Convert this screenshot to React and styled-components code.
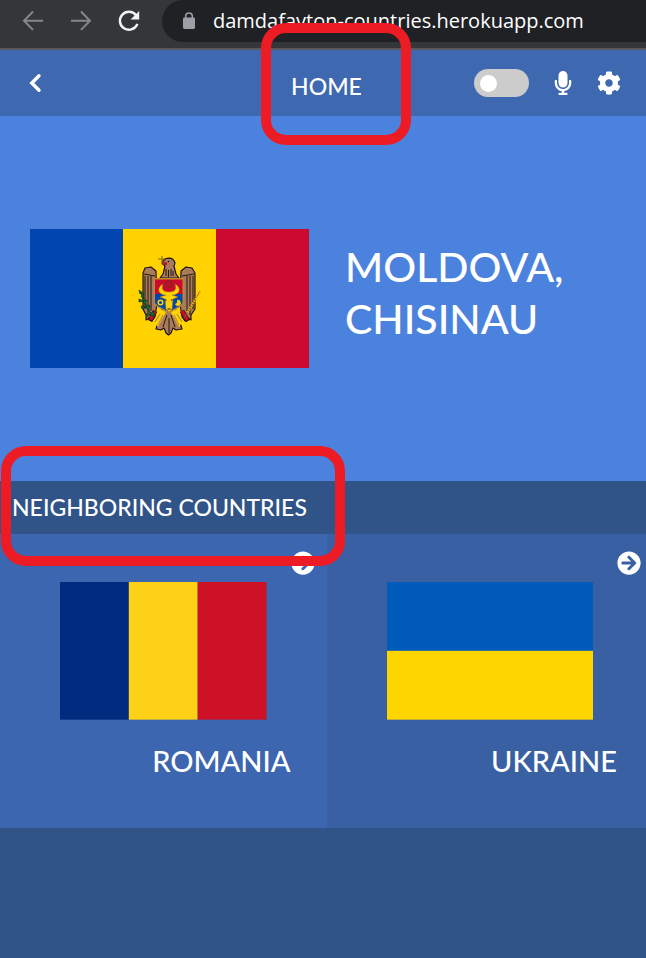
import React from 'react';
import styled, { createGlobalStyle } from 'styled-components';
import { FaArrowCircleRight, FaCog, FaMicrophone } from 'react-icons/fa';

const GlobalStyle = createGlobalStyle`
  *, *::before, *::after { box-sizing: border-box; }
  body {
    margin: 0;
    background: #305388;
    color: #fff;
    font-family: "Gill Sans", Lato, "Open Sans", sans-serif;
    font-weight: 500;
  }
  h1, h2, h3 { margin: 0; font-weight: 500; }
  button { border: 0; padding: 0; background: none; color: inherit; cursor: pointer; }
  a { color: inherit; text-decoration: none; }
`;

const Shell = styled.div`
  position: relative;
  min-height: 100vh;
  overflow: hidden;
`;

const BrowserBar = styled.div`
  display: flex;
  align-items: flex-start;
  height: 50px;
  background: #35363a;
  border-bottom: 2px solid #59595c;
`;

const BrowserActions = styled.div`
  display: flex;
  gap: 24px;
  padding: 9px 21px 0 21px;
`;

const BrowserButton = styled.button`
  width: 24px;
  height: 24px;
  svg { display: block; }
`;

const AddressBar = styled.label`
  display: flex;
  flex: 1;
  align-items: center;
  gap: 17px;
  height: 42px;
  padding-left: 20px;
  border-radius: 21px 0 0 21px;
  background: #202124;
  svg { flex: none; }
`;

const AddressInput = styled.input`
  flex: 1;
  min-width: 0;
  padding: 0;
  border: 0;
  outline: 0;
  background: transparent;
  color: #fff;
  font: 400 20px/28px "Segoe UI", "Open Sans", "Noto Sans", sans-serif;
`;

const Page = styled.div`
  width: calc(100% + 7px);
`;

const NavBar = styled.header`
  display: grid;
  grid-template-columns: 1fr auto 1fr;
  align-items: center;
  height: 66px;
  padding: 0 32px 0 24px;
  background: #3e68b0;
`;

const IconButton = styled.button`
  display: flex;
  align-items: center;
  justify-content: center;
  width: 24px;
  height: 24px;
`;

const HomeLink = styled.a`
  padding: 6px 0 0 8px;
  font-size: 23px;
  line-height: 28px;
`;

const NavTools = styled.div`
  display: flex;
  align-items: center;
  justify-content: flex-end;
  gap: 22px;
`;

const Toggle = styled.input`
  appearance: none;
  display: flex;
  align-items: center;
  width: 55px;
  height: 28px;
  margin: 0;
  padding: 0 6px;
  border-radius: 14px;
  background: #ccc;
  cursor: pointer;
  &::before {
    content: "";
    width: 17px;
    height: 17px;
    border-radius: 50%;
    background: #fff;
  }
  &:checked { justify-content: flex-end; background: #305388; }
`;

const Hero = styled.section`
  display: grid;
  grid-template-columns: 279fr 272fr;
  align-items: center;
  gap: 36px;
  min-height: 365px;
  padding: 0 36px 0 30px;
  background: #4b82dd;
`;

const Flag = styled.svg`
  display: block;
  width: 100%;
  height: auto;
`;

const CountryTitle = styled.h1`
  padding-bottom: 12px;
  font-size: 41px;
  line-height: 52px;
`;

const SectionTitle = styled.h2`
  padding: 12px;
  background: #305388;
  font-size: 23px;
  line-height: 29px;
`;

const Neighbors = styled.div`
  display: grid;
  grid-template-columns: 1fr 1fr;
`;

const Card = styled.article`
  display: flex;
  flex-direction: column;
  min-height: 294px;
  padding: 17px 12px 0 60px;
  background: ${({ $tone }) => $tone};
`;

const CardLink = styled.a`
  align-self: flex-end;
  height: 24px;
  svg { display: block; }
`;

const CardFlag = styled.div`
  padding: 7px 48px 0 0;
`;

const CardName = styled.h3`
  padding: 23px 24px 0 0;
  font-size: 29px;
  line-height: 36px;
  text-align: right;
`;

const Highlight = styled.div`
  position: absolute;
  top: ${({ $top }) => $top}px;
  left: ${({ $left }) => $left};
  width: ${({ $width }) => $width}px;
  height: ${({ $height }) => $height}px;
  border: 10px solid #ed1c24;
  border-radius: 25px;
  pointer-events: none;
`;

const BackArrow = () => (
  <svg width="24" height="24" viewBox="0 0 24 24" fill="none" stroke="#86878a" strokeWidth="2">
    <path d="M22 11.7H3.5M12 2.5L3 11.7l9 9.2" />
  </svg>
);

const ForwardArrow = () => (
  <svg width="24" height="24" viewBox="0 0 24 24" fill="none" stroke="#86878a" strokeWidth="2">
    <path d="M2 11.7h18.5M12 2.5l9 9.2-9 9.2" />
  </svg>
);

const Reload = () => (
  <svg width="24" height="24" viewBox="0 0 24 24">
    <path d="M20.4 14.8A9 9 0 1 1 19 6.2" fill="none" stroke="#f1f3f4" strokeWidth="2.4" />
    <path d="M22.2 2v8.6h-8.6z" fill="#f1f3f4" />
  </svg>
);

const Lock = () => (
  <svg width="14" height="18" viewBox="0 0 14 18">
    <path d="M3.7 7V4.3a3.3 3.3 0 0 1 6.6 0V7" fill="none" stroke="#9aa0a6" strokeWidth="1.6" />
    <rect x="1" y="5.5" width="12" height="11.5" rx="1.4" fill="#9aa0a6" />
  </svg>
);

const ChevronLeft = () => (
  <svg width="24" height="24" viewBox="0 0 24 24" fill="none" stroke="#fff" strokeWidth="3.4" strokeLinecap="round">
    <path d="M15 4.8L7.8 12l7.2 7.2" />
  </svg>
);

/* Shield-bearing eagle, drawn in a 62 x 78 box. */
const Eagle = () => (
  <g transform="translate(109 29)">
    <g fill="#a77b5b" stroke="#170d05" strokeWidth="1.1" strokeLinejoin="round">
      <path d="M24 48l-7 23 5 1 3-2 2 5 2.5 2 2.5-2 2-5 3 2 6-1-7-23z" />
      <path d="M17 13l-5-4-6 1-2 5v36l3 6v5l3-2 3 3 3-4 2-13z" />
      <path d="M42 13l5-4 6 1 3 5v36l-4 6v5l-3-2-3 3-3-4-2-13z" />
      <path d="M21 20l3-4 2-8-3-3c2-6 11-7 13 0l-1 3 2 8 3 4z" />
    </g>
    <g fill="none" stroke="#170d05" strokeWidth=".9">
      <path d="M6 18v33M9 18v39M12 18v35M54 18v33M51 18v39M48 18v35M5 16l11 2M55 16l-12 2" />
      <path d="M27 11v7M29.5 12v7M32 11v7M34 13v5M28 57l-4 12M32 57l4 12M30 60v15" />
    </g>
    <path d="M28 4.5l-5-1 1 3 4 .5z" fill="#cc092f" />
    <path d="M23 -2v7M19 1h7M26 3l-3 4" stroke="#806617" strokeWidth="1" />
    <circle cx="29.5" cy="3.5" r=".7" />
    <path d="M21 51l6 3-8 15-4-6zM38 51l-6 3 8 15 4-6z" fill="#ffd200" />
    <path d="M21 56l-5 8M24 57l-5 10M38 56l5 8M35 57l5 10" stroke="#a77b5b" strokeWidth="1" />
    <path d="M16 53l-5 10M43 53l6 10" stroke="#170d05" strokeWidth="4.6" />
    <path d="M16 53l-4.5 9M43 53l5.5 9" stroke="#cc092f" strokeWidth="3.4" />
    <path d="M15 20h29.5v25l-3 4-11.500 6-12-6-3-4z" fill="#c58a2b" />
    <path d="M16 21.500h27.500V36H16z" fill="#cc092f" />
    <path d="M16 36h27.500v9l-3 3-10.700 5.500L19 48l-3-3z" fill="#0046ae" />
    <path d="M24 26c-7 4-5 11 3 11l-6 2 5 2 1 10 3 3 3-3 1-10 5-2-6-2c8 0 10-7 3-11 2 5 0 8-6 8s-8-3-6-8z" fill="#ffd200" stroke="#a47818" strokeWidth=".5" />
    <path d="M29.700 22l1 2 2-1-.5 2 2 1-2 1 .5 2-2-1-1 2-1-2-2 1 .5-2-2-1 2-1-.5-2 2 1z" fill="none" stroke="#70301b" strokeWidth=".8" />
    <path d="M26 42h1.500M32 42h1.500M28.500 51h3" stroke="#170d05" strokeWidth="1.2" />
    <circle cx="21.500" cy="44.500" r="2.300" fill="none" stroke="#ffd200" strokeWidth="1.5" />
    <path d="M36 46a3 3 0 1 0 2-4 3 3 0 0 1-2 4z" fill="#ffd200" />
    <path d="M2 34l3 8 5 11 5 6" fill="none" stroke="#145328" strokeWidth="1.4" />
    <path d="M0 32l4 3-3 1zM5 36l-1 5-2-3zM0 41l5 2-5 1zM8 42l-2 5-2-4zM2 48l5 1-4 2zM11 47l-1 5-4-3zM7 56l5 0-4 3zM15 53l0 6-4-3z" fill="#146b35" stroke="#123b20" strokeWidth=".7" />
    <path d="M61 33L45 60" stroke="#805d12" strokeWidth="1" />
    <path d="M61 34l-13 21" stroke="#e9b313" strokeWidth="2.500" strokeDasharray="1.5 1" />
  </g>
);

const MoldovaFlag = () => (
  <Flag viewBox="0 0 279 139" role="img" aria-label="Flag of Moldova">
    <rect width="93" height="139" fill="#0046ae" />
    <rect x="93" width="93" height="139" fill="#ffd200" />
    <rect x="186" width="93" height="139" fill="#cc092f" />
    <Eagle />
  </Flag>
);

const RomaniaFlag = () => (
  <Flag viewBox="0 0 207 138" role="img" aria-label="Flag of Romania">
    <rect width="69" height="138" fill="#002b7f" />
    <rect x="69" width="69" height="138" fill="#fcd116" />
    <rect x="138" width="69" height="138" fill="#ce1126" />
  </Flag>
);

const UkraineFlag = () => (
  <Flag viewBox="0 0 207 138" role="img" aria-label="Flag of Ukraine">
    <rect width="207" height="69" fill="#005bbb" />
    <rect y="69" width="207" height="69" fill="#ffd500" />
  </Flag>
);

const neighbors = [
  { name: 'ROMANIA', tone: '#3c66af', FlagImage: RomaniaFlag },
  { name: 'UKRAINE', tone: '#3960a3', FlagImage: UkraineFlag },
];

export default function App() {
  return (
    <Shell>
      <GlobalStyle />
      <BrowserBar>
        <BrowserActions>
          <BrowserButton aria-label="Back"><BackArrow /></BrowserButton>
          <BrowserButton aria-label="Forward"><ForwardArrow /></BrowserButton>
          <BrowserButton aria-label="Reload"><Reload /></BrowserButton>
        </BrowserActions>
        <AddressBar>
          <Lock />
          <AddressInput aria-label="Address" defaultValue="damdafayton-countries.herokuapp.com" />
        </AddressBar>
      </BrowserBar>
      <Page>
        <NavBar>
          <IconButton aria-label="Previous page"><ChevronLeft /></IconButton>
          <HomeLink href="#home">HOME</HomeLink>
          <NavTools>
            <Toggle type="checkbox" aria-label="Change theme" />
            <IconButton aria-label="Voice search"><FaMicrophone size={24} /></IconButton>
            <IconButton aria-label="Settings"><FaCog size={24} /></IconButton>
          </NavTools>
        </NavBar>
        <main>
          <Hero>
            <MoldovaFlag />
            <CountryTitle>MOLDOVA,<br />CHISINAU</CountryTitle>
          </Hero>
          <SectionTitle>NEIGHBORING COUNTRIES</SectionTitle>
          <Neighbors>
            {neighbors.map(({ name, tone, FlagImage }) => (
              <Card key={name} $tone={tone}>
                <CardLink href={`#${name.toLowerCase()}`} aria-label={`Open ${name}`}>
                  <FaArrowCircleRight size={24} />
                </CardLink>
                <CardFlag><FlagImage /></CardFlag>
                <CardName>{name}</CardName>
              </Card>
            ))}
          </Neighbors>
        </main>
      </Page>
      <Highlight $top={23} $left="calc(50% - 62px)" $width={150} $height={122} />
      <Highlight $top={446} $left="1px" $width={344} $height={120} />
    </Shell>
  );
}
